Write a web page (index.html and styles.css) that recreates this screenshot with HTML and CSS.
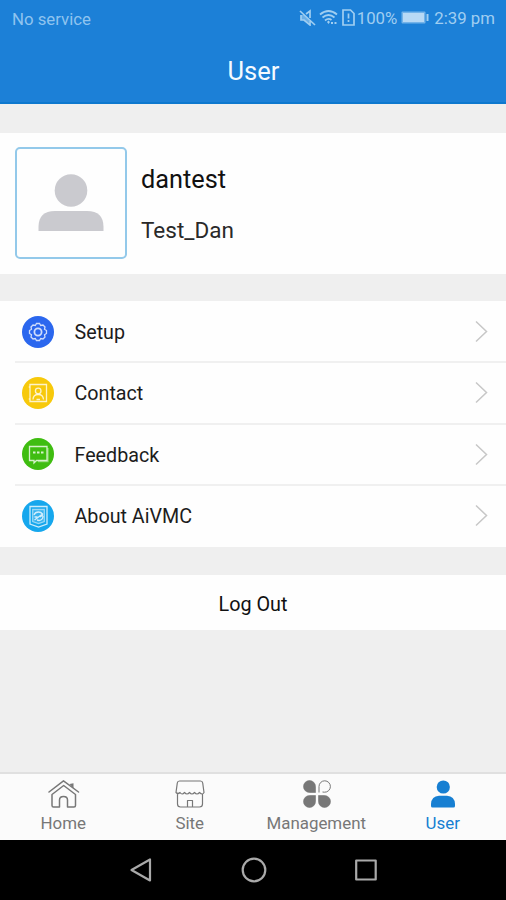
FILE: index.html
```html
<!DOCTYPE html>
<html lang="en">
<head>
<meta charset="utf-8">
<title>User</title>
<link rel="stylesheet" href="styles.css">
</head>
<body>
<div class="screen">
  <header class="header">
    <div class="status">
      <span class="carrier">No service</span>
      <div class="indicators">
        <svg class="mute" width="17" height="17" viewBox="0 0 17 17"><path d="M2 6v5h3l6 5v-4M7 5l4-3v7M1 2l15 14" fill="none" stroke="currentColor" stroke-width="1.700"/><path d="M2 6h3l5 5v3l-5-3H2z" fill="currentColor" opacity=".6"/></svg>
        <svg class="wifi" width="19" height="17" viewBox="0 0 19 17"><path d="M1 5.500Q9.500-1.500 18 5.500M3.500 8.500Q9.500 3.500 15.500 8.500M6 11.500Q9.500 8.500 12.500 11" fill="none" stroke="currentColor" stroke-width="1.800"/><path d="M8 13l1.500-1.500L11 13l-1.500 2zM12 13h2v2h-2zM15.500 13h2v2h-2z" fill="currentColor"/></svg>
        <svg class="sim" width="13" height="17" viewBox="0 0 13 17"><path d="M1 1h7.500L12 4.500V16H1z" fill="none" stroke="currentColor" stroke-width="1.700"/><path d="M6.500 4.500v5M6.500 11v2" stroke="currentColor" stroke-width="1.700"/></svg>
        <span class="percent">100%</span>
        <svg class="battery" width="28" height="13" viewBox="0 0 28 13"><rect x=".5" y=".5" width="24" height="12" rx="1" fill="#73b3e9"/><rect x="2" y="2" width="21" height="9" fill="#b7d9f5"/><path d="M26.500 3v7" stroke="#a0cef1" stroke-width="2"/></svg>
        <span class="time">2:39 pm</span>
      </div>
    </div>
    <h1 class="title">User</h1>
  </header>

  <section class="profile">
    <div class="avatar">
      <svg width="66" height="58" viewBox="0 0 66 58"><circle cx="33" cy="16.500" r="16.300"/><path d="M.5 57v-4Q.5 37 17 37h32q16.500 0 16.500 16v4z"/></svg>
    </div>
    <div class="names">
      <div class="login">dantest</div>
      <div class="full">Test_Dan</div>
    </div>
  </section>

  <nav class="menu">
    <a class="row">
      <svg class="badge" viewBox="0 0 32 32"><circle cx="16" cy="16" r="16" fill="#2b67ee"/><g class="line"><path d="M14.500 7.500h3l1.200 2 2.300-.5 2 2-.5 2.300 2 1.200v3l-2 1.200.5 2.300-2 2-2.300-.5-1.200 2h-3l-1.200-2-2.300.5-2-2 .5-2.300-2-1.200v-3l2-1.200-.5-2.300 2-2 2.300.5z"/><circle cx="16" cy="16" r="3.600" stroke-width="1.800"/></g></svg>
      <span class="label">Setup</span>
      <svg class="chevron" viewBox="0 0 13 22"><path d="M1 1l10.500 10L1 21"/></svg>
    </a>
    <a class="row">
      <svg class="badge" viewBox="0 0 32 32"><circle cx="16" cy="16" r="16" fill="#f7c90b"/><g class="line"><path d="M8 7.500h16.500v17H8zM8 10H6.800M8 22H6.800"/><circle cx="16.200" cy="14" r="2.800"/><path d="M11 22.500q.2-5 5.200-5t5.300 5M14.500 22.500h3.500"/></g></svg>
      <span class="label">Contact</span>
      <svg class="chevron" viewBox="0 0 13 22"><path d="M1 1l10.500 10L1 21"/></svg>
    </a>
    <a class="row">
      <svg class="badge" viewBox="0 0 32 32"><circle cx="16" cy="16" r="16" fill="#3fbd11"/><g class="line"><path d="M7.500 8.500h17.500v14H14.500l-2.500 2.500v-2.500H7.500z"/><path d="M11 14.500h2.500M15 14.500h2.500M19 14.500h2.500" stroke-width="2"/><path d="M26 10v13.500H16" opacity=".5"/></g></svg>
      <span class="label">Feedback</span>
      <svg class="chevron" viewBox="0 0 13 22"><path d="M1 1l10.500 10L1 21"/></svg>
    </a>
    <a class="row">
      <svg class="badge" viewBox="0 0 32 32"><circle cx="16" cy="16" r="16" fill="#16a7ed"/><g class="line"><path d="M8 6.500h17v17.500l-8.500 3L8 24z"/><path d="M10.700 9.500h11.600v12l-5.800 2-5.800-2z" fill="#fff" fill-opacity=".2" opacity=".7"/><path d="M12 15q1-3 4.500-3 2.500 0 4 2l-8 6M12.500 17l3 0M21 16q0 4-4 4.500l-2-.5M18 17l3-2"/></g></svg>
      <span class="label">About AiVMC</span>
      <svg class="chevron" viewBox="0 0 13 22"><path d="M1 1l10.500 10L1 21"/></svg>
    </a>
  </nav>

  <button class="logout">Log Out</button>

  <nav class="tabs">
    <a class="tab">
      <svg class="home" width="32" height="28" viewBox="0 0 32 28"><g fill="none" stroke="currentColor" stroke-width="1.500" stroke-linejoin="round" stroke-linecap="round"><path d="M1 12L15.500.8 30.500 12M4 14.500v11q0 1.500 1.500 1.500h6v-7q0-3.500 4-3.500t4 3.500V27H26q1.500 0 1.500-1.500v-11L15.700 5.500z"/></g><path d="M21.500 4l4-.8v5z" fill="currentColor"/></svg>
      <span>Home</span>
    </a>
    <a class="tab">
      <svg width="32" height="28" viewBox="0 0 32 28"><path d="M5.500 1h21q2 0 2.200 2l1.300 9.500q-1.500 3-4.500 0-2.500 3-5 0-2.500 3-5 0-2.500 3-5 0-2.500 3-4.500 0-2 2-4 0L3.300 3Q3.500 1 5.500 1zM3.500 14v10q0 3 3 3h19q3 0 3-3V14M13.500 27v-6.500h5V27" fill="none" stroke="currentColor" stroke-width="1.200" stroke-linejoin="round"/></svg>
      <span>Site</span>
    </a>
    <a class="tab">
      <svg class="petals" width="28" height="28" viewBox="0 0 28 28"><path d="M6.500.5a6 6 0 0 1 6 6v6h-6a6 6 0 0 1 0-12zM6.500 15.500h6v6a6 6 0 1 1-6-6zM15.500 15.500h6a6 6 0 1 1-6 6z" fill="currentColor" stroke="currentColor" stroke-width=".6"/><path d="M16 12.500V6.500A5.700 5.700 0 1 1 21.500 12.200L19.500 12" fill="none" stroke="currentColor"/></svg>
      <span>Management</span>
    </a>
    <a class="tab active">
      <svg width="26" height="28" viewBox="0 0 26 28"><circle cx="13.300" cy="7" r="6.600" fill="currentColor"/><path d="M1 26V24Q1.500 16 9 15.700h8q7.500.3 8 8.300v2q0 1.500-1.500 1.500h-21Q1 27.500 1 26z" fill="currentColor"/></svg>
      <span>User</span>
    </a>
  </nav>

  <footer class="system">
    <svg width="22" height="26" viewBox="0 0 22 26"><path d="M20 2.500v21L1.500 13z"/></svg>
    <svg width="26" height="26" viewBox="0 0 26 26"><circle cx="13" cy="13" r="11.300"/></svg>
    <svg width="22" height="26" viewBox="0 0 22 26"><path d="M1.200 3.500h19.500v19H1.200z"/></svg>
  </footer>
</div>
</body>
</html>
```

FILE: styles.css
```css
* { box-sizing: border-box; }
body { margin: 0; font-family: Roboto, "Liberation Sans", sans-serif; }
svg { display: block; flex: none; }

.screen {
  width: 506px;
  height: 900px;
  display: flex;
  flex-direction: column;
  background: #efefef;
  overflow: hidden;
}

.header {
  height: 104px;
  flex: none;
  background: #1c80d7;
  border-bottom: 2px solid #0e78ce;
}
.status {
  height: 35px;
  padding: 0 11px 0 12px;
  display: flex;
  align-items: center;
  justify-content: space-between;
  color: #a0cef1;
  font-size: 17px;
  line-height: 20px;
}
.carrier { padding-top: 2px; color: #8fc4ef; font-size: 16.800px; }
.indicators { display: flex; align-items: center; }
.wifi { margin-left: 3px; }
.sim { margin-left: 4px; }
.percent { margin-left: 2px; font-size: 16.800px; }
.battery { margin-left: 4px; }
.time { margin-left: 5px; font-size: 16.800px; }
.title {
  margin: 21px 0 0;
  padding-left: 1px;
  color: #f4faff;
  font-size: 25.500px;
  font-weight: 400;
  line-height: 30px;
  text-align: center;
}

.profile {
  height: 141px;
  flex: none;
  margin-top: 29px;
  padding: 14px 15px;
  display: flex;
  gap: 14px;
  background: #fefefe;
}
.avatar {
  width: 112px;
  height: 112px;
  padding-top: 25px;
  display: flex;
  justify-content: center;
  border: 2px solid #93c9ea;
  border-radius: 5px;
}
.avatar svg { fill: #cacacf; }
.names { padding-top: 18px; color: #111; }
.login { font-size: 25.300px; line-height: 30px; }
.full { margin-top: 21px; font-size: 22.500px; line-height: 28px; color: #292929; }

.menu {
  height: 246px;
  flex: none;
  margin-top: 27px;
  padding-top: 1px;
  display: grid;
  grid-template-rows: repeat(4, 61.300px);
  background: #fefefe;
}
.row {
  margin-left: 15px;
  padding: 0 18px 0 7px;
  display: flex;
  align-items: center;
  border-bottom: 2px solid #f0f0f0;
}
.row:last-child { border-color: transparent; }
.badge { width: 32px; height: 32px; }
.line { fill: none; stroke: #fff; stroke-opacity: .78; stroke-width: 1.300; }
.label { margin-left: 20.500px; padding-top: 3px; flex: 1; font-size: 19.700px; line-height: 24px; color: #1c1c1c; }
.chevron { width: 13px; height: 23px; fill: none; stroke: #c7c7c7; stroke-width: 1.500; }

.logout {
  height: 55px;
  flex: none;
  margin: 28px 0 0;
  padding: 4px 0 0;
  border: 0;
  background: #fefefe;
  color: #111;
  font: 19.800px/24px Roboto, "Liberation Sans", sans-serif;
}

.tabs {
  height: 68px;
  flex: none;
  margin-top: auto;
  padding-top: 6px;
  display: grid;
  grid-template-columns: repeat(4, 1fr);
  background: #fbfbfb;
  border-top: 2px solid #e0e0e0;
}
.tab {
  display: flex;
  flex-direction: column;
  align-items: center;
  gap: 5px;
  color: #777;
  font-size: 16.900px;
  line-height: 20px;
}
.home, .petals { margin-left: 1px; }
.active { color: #177fd2; }

.system {
  height: 60px;
  flex: none;
  padding-left: 1px;
  display: flex;
  align-items: center;
  justify-content: center;
  gap: 88.500px;
  background: #000;
}
.system svg { fill: none; stroke: #aaa; stroke-width: 2.200; stroke-linejoin: round; }
```
